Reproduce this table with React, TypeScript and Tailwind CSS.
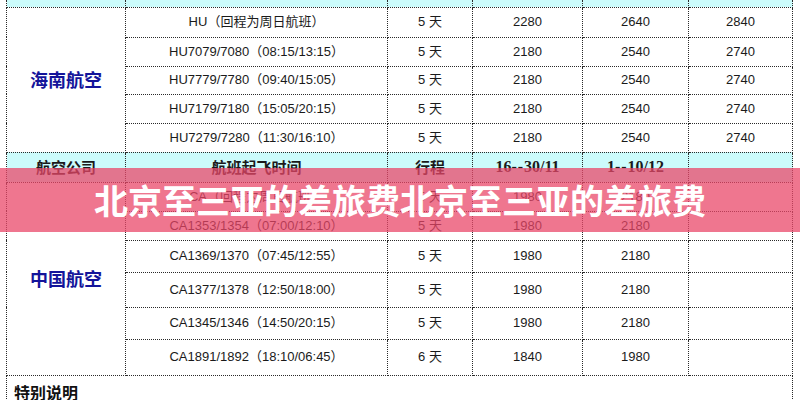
import React from "react";

const hu = [
  ["HU（回程为周日航班）", "5 天", "2280", "2640", "2840"],
  ["HU7079/7080（08:15/13:15）", "5 天", "2180", "2540", "2740"],
  ["HU7779/7780（09:40/15:05）", "5 天", "2180", "2540", "2740"],
  ["HU7179/7180（15:05/20:15）", "5 天", "2180", "2540", "2740"],
  ["HU7279/7280（11:30/16:10）", "5 天", "2180", "2540", "2740"],
];
const huH = ["h-[30px]", "h-[29px]", "h-[28px]", "h-[29px]", "h-[29px]"];

const ca = [
  ["CA（回程为周日航班）", "5 天", "1980", "2180", ""],
  ["CA1353/1354（07:00/12:10）", "5 天", "1980", "2180", ""],
  ["CA1369/1370（07:45/12:55）", "5 天", "1980", "2180", ""],
  ["CA1377/1378（12:50/18:00）", "5 天", "1980", "2180", ""],
  ["CA1345/1346（14:50/20:15）", "5 天", "1980", "2180", ""],
  ["CA1891/1892（18:10/06:45）", "6 天", "1840", "1980", ""],
];
const caH = ["h-[29px]", "h-[29px]", "h-[32px]", "h-[35px]", "h-[32px]", "h-[36px]"];

const cell = "border border-dotted border-[#2a2a2a] p-0 text-center align-middle";

export default function App() {
  return (
    <div className="relative w-[800px] h-[400px] overflow-hidden bg-white text-[#1a1a1a] font-['Liberation_Sans','Noto_Sans_CJK_SC',sans-serif] text-[13px]">
      <table className="table-fixed border-collapse ml-[6px] w-[786px]">
        <colgroup>
          <col className="w-[119px]" />
          <col className="w-[262px]" />
          <col className="w-[85px]" />
          <col className="w-[110px]" />
          <col className="w-[106px]" />
          <col className="w-[104px]" />
        </colgroup>
        <tbody>
          <tr className="h-[7px] bg-[#ccfcfc]">
            {[0, 1, 2, 3, 4, 5].map((i) => (
              <td key={i} className="border-x border-b border-dotted border-[#2a2a2a] p-0" />
            ))}
          </tr>
          {hu.map((r, i) => (
            <tr key={i} className={huH[i]}>
              {i === 0 && (
                <td rowSpan={5} className={cell}>
                  <span className="text-[18px] font-bold text-[#14149a] font-['Noto_Sans_CJK_SC',sans-serif]">海南航空</span>
                </td>
              )}
              {r.map((v, j) => (
                <td key={j} className={cell}>{v}</td>
              ))}
            </tr>
          ))}
          <tr className="h-[30px] bg-[#ccfcfc] font-bold text-[#1a1a1a]">
            <td className={`${cell} text-[15px] font-['Noto_Sans_CJK_SC',sans-serif]`}>航空公司</td>
            <td className={`${cell} text-[15px] font-['Noto_Sans_CJK_SC',sans-serif]`}>航班起飞时间</td>
            <td className={`${cell} text-[15px] font-['Noto_Sans_CJK_SC',sans-serif]`}>行程</td>
            <td className={`${cell} text-[16px] font-['Liberation_Serif',serif]`}>16<span className="tracking-[1px]">--</span>30/11</td>
            <td className={`${cell} text-[16px] font-['Liberation_Serif',serif]`}>1<span className="tracking-[1px]">--</span>10/12</td>
            <td className={cell} />
          </tr>
          {ca.map((r, i) => (
            <tr key={i} className={caH[i]}>
              {i === 0 && (
                <td rowSpan={6} className={cell}>
                  <span className="text-[18px] font-bold text-[#14149a] font-['Noto_Sans_CJK_SC',sans-serif]">中国航空</span>
                </td>
              )}
              {r.map((v, j) => (
                <td key={j} className={cell}>{v}</td>
              ))}
            </tr>
          ))}
          <tr className="h-[40px]">
            <td colSpan={6} className="border-x border-t border-dotted border-[#2a2a2a] px-[7px] pt-[4px] align-top text-left">
              <span className="text-[16px] font-bold text-[#111] font-['Noto_Sans_CJK_SC',sans-serif]">特别说明</span>
            </td>
          </tr>
        </tbody>
      </table>
      <div className="absolute left-0 right-0 top-[168px] h-[64px] bg-[rgba(234,70,104,0.74)] flex items-center justify-center">
        <span className="text-white font-bold text-[34px] leading-none font-['Noto_Sans_CJK_SC',sans-serif]">
          北京至三亚的差旅费北京至三亚的差旅费
        </span>
      </div>
    </div>
  );
}
